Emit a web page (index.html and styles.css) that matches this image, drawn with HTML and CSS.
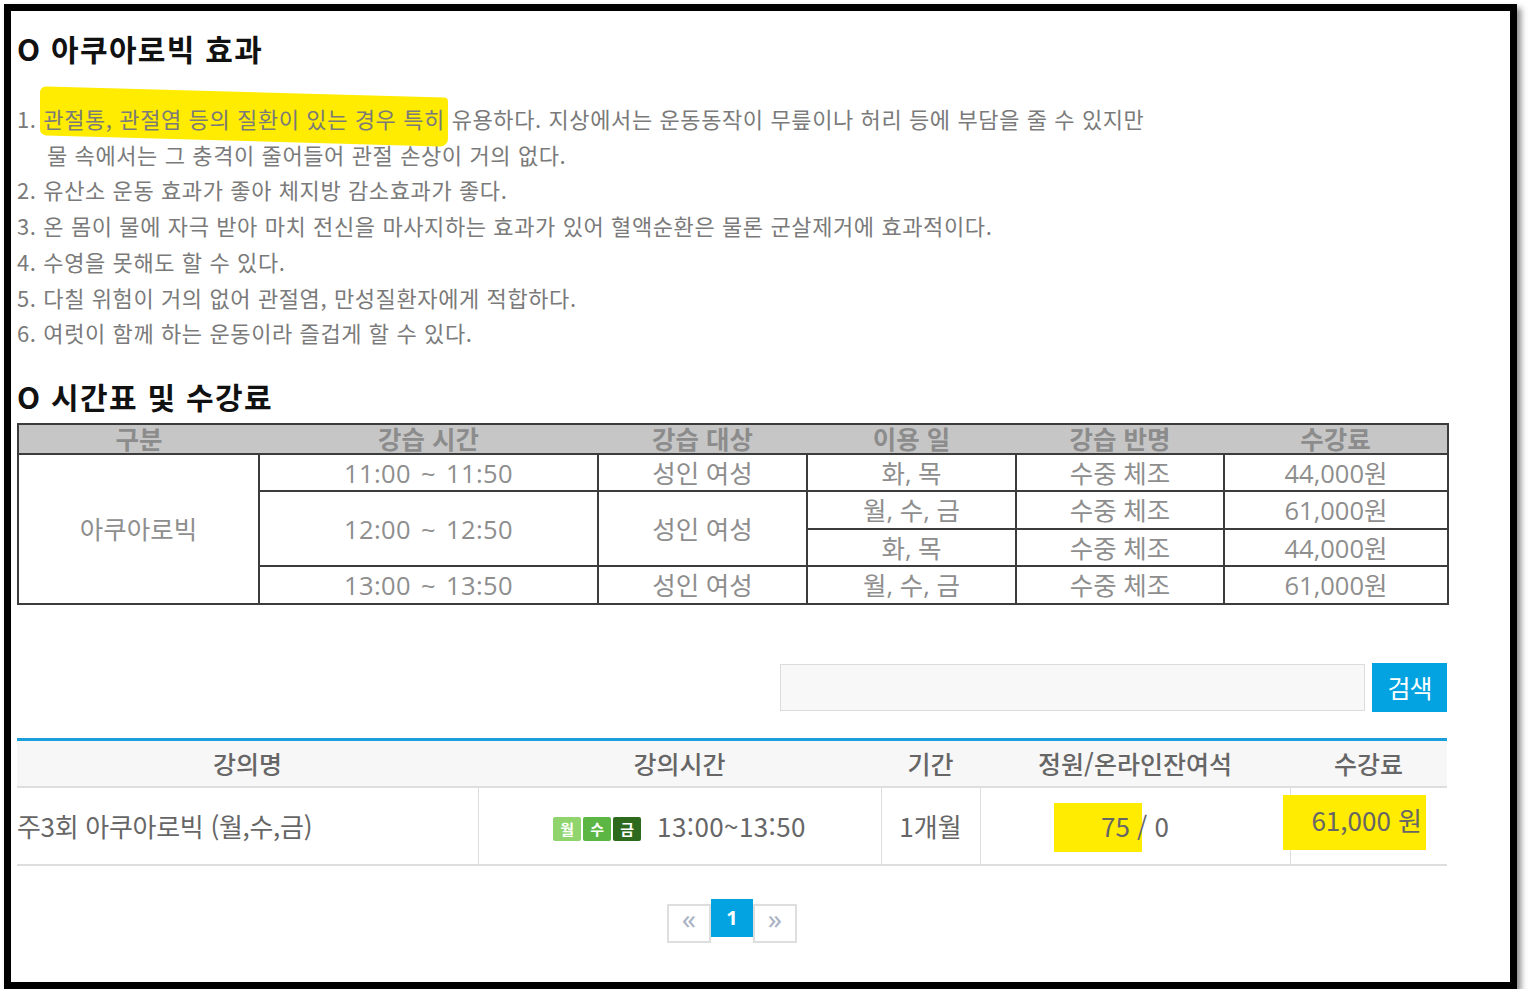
FILE: index.html
```html
<!DOCTYPE html>
<html lang="ko">
<head>
<meta charset="utf-8">
<title>아쿠아로빅</title>
<link rel="stylesheet" href="styles.css">
</head>
<body>
<div class="frame">
  <h2 class="title">O 아쿠아로빅 효과</h2>
  <ol class="effects">
    <li>1. <span class="mark-line">관절통, 관절염 등의 질환이 있는 경우 특히</span> 유용하다. 지상에서는 운동동작이 무릎이나 허리 등에 부담을 줄 수 있지만</li>
    <li class="indent">물 속에서는 그 충격이 줄어들어 관절 손상이 거의 없다.</li>
    <li>2. 유산소 운동 효과가 좋아 체지방 감소효과가 좋다.</li>
    <li>3. 온 몸이 물에 자극 받아 마치 전신을 마사지하는 효과가 있어 혈액순환은 물론 군살제거에 효과적이다.</li>
    <li>4. 수영을 못해도 할 수 있다.</li>
    <li>5. 다칠 위험이 거의 없어 관절염, 만성질환자에게 적합하다.</li>
    <li>6. 여럿이 함께 하는 운동이라 즐겁게 할 수 있다.</li>
  </ol>

  <h2 class="title title-2">O 시간표 및 수강료</h2>
  <table class="schedule">
    <colgroup>
      <col class="c1"><col class="c2"><col class="c3"><col class="c4"><col class="c5"><col class="c6">
    </colgroup>
    <thead>
      <tr><th>구분</th><th>강습 시간</th><th>강습 대상</th><th>이용 일</th><th>강습 반명</th><th>수강료</th></tr>
    </thead>
    <tbody>
      <tr><td rowspan="4">아쿠아로빅</td><td class="tm">11:00 ~ 11:50</td><td>성인 여성</td><td>화, 목</td><td>수중 체조</td><td>44,000원</td></tr>
      <tr><td class="tm" rowspan="2">12:00 ~ 12:50</td><td rowspan="2">성인 여성</td><td>월, 수, 금</td><td>수중 체조</td><td>61,000원</td></tr>
      <tr><td>화, 목</td><td>수중 체조</td><td>44,000원</td></tr>
      <tr><td class="tm">13:00 ~ 13:50</td><td>성인 여성</td><td>월, 수, 금</td><td>수중 체조</td><td>61,000원</td></tr>
    </tbody>
  </table>

  <div class="search">
    <input class="search-input" type="text" aria-label="검색어">
    <button class="search-btn" type="button">검색</button>
  </div>

  <table class="courses">
    <colgroup>
      <col class="k1"><col class="k2"><col class="k3"><col class="k4"><col class="k5">
    </colgroup>
    <thead>
      <tr><th>강의명</th><th>강의시간</th><th>기간</th><th>정원/온라인잔여석</th><th>수강료</th></tr>
    </thead>
    <tbody>
      <tr>
        <td class="name">주3회 아쿠아로빅 (월,수,금)</td>
        <td class="time"><span class="days"><span class="day d1">월</span><span class="day d2">수</span><span class="day d3">금</span></span>13:00~13:50</td>
        <td>1개월</td>
        <td><span class="mark-seat">75</span> / 0</td>
        <td><span class="mark-fee">61,000 원</span></td>
      </tr>
    </tbody>
  </table>

  <div class="pager">
    <span class="pg pg-side">&laquo;</span>
    <span class="pg pg-active">1</span>
    <span class="pg pg-side">&raquo;</span>
  </div>
</div>
</body>
</html>
```

FILE: styles.css
```css
html, body {
  margin: 0;
  padding: 0;
  background: #ffffff;
}

body {
  font-family: "Noto Sans CJK KR", "Noto Sans", sans-serif;
}

.frame {
  box-sizing: border-box;
  width: 1513px;
  height: 985px;
  margin: 4px 0 0 4px;
  border: 7px solid #000;
  box-shadow: 4px 4px 6px rgba(0, 0, 0, 0.45);
  padding: 20px 0 0 6px;
  background: #fff;
}

.title {
  margin: 0;
  font-size: 30px;
  line-height: 35px;
  font-weight: 700;
  color: #111;
  letter-spacing: 1.3px;
}

.effects {
  list-style: none;
  margin: 35px 0 0 0;
  padding: 0;
  font-size: 22px;
  line-height: 35.7px;
  color: #7a7a7a;
  font-weight: 400;
  letter-spacing: 0.6px;
}

.effects .indent {
  padding-left: 30px;
}

.mark-line {
  position: relative;
  z-index: 0;
  display: inline-block;
  line-height: 35.7px;
}

.mark-line::before {
  content: "";
  position: absolute;
  z-index: -1;
  left: -3px;
  right: -3px;
  top: -9px;
  bottom: -4px;
  background: #ffec00;
  transform: skewY(1.6deg);
  border-radius: 6px 4px 8px 6px;
}

.title-2 {
  margin-top: 28px;
}

.schedule {
  margin-top: 9px;
  width: 1430px;
  border-collapse: collapse;
  table-layout: fixed;
  border: 2px solid #3c3c3c;
  font-family: "Open Sans", "Noto Sans CJK KR", sans-serif;
  color: #8e8e8e;
  font-size: 25.5px;
}

.schedule .c1 { width: 241px; }
.schedule .c2 { width: 339px; }
.schedule .c3 { width: 209px; }
.schedule .c4 { width: 209px; }
.schedule .c5 { width: 208px; }
.schedule .c6 { width: 224px; }

.schedule th {
  background: #c6c6c6;
  height: 28px;
  padding: 0;
  line-height: 26px;
  font-weight: 700;
  color: #8c8c8c;
  font-family: "Noto Sans CJK KR", sans-serif;
  font-size: 25.5px;
  border: 0;
  vertical-align: top;
}

.schedule td {
  border: 2px solid #3c3c3c;
  text-align: center;
  padding: 0;
  height: 35.5px;
  line-height: 30px;
}

.schedule td.tm {
  word-spacing: 3px;
  letter-spacing: 0.4px;
}

.search {
  display: flex;
  justify-content: flex-end;
  align-items: center;
  gap: 7px;
  width: 1430px;
  margin-top: 58px;
}

.search-input {
  box-sizing: border-box;
  width: 585px;
  height: 47px;
  margin: 0;
  border: 1px solid #dcdcdc;
  background: #f8f8f8;
  outline: none;
}

.search-btn {
  box-sizing: border-box;
  width: 75px;
  height: 49px;
  margin: 0;
  border: 0;
  background: #02a3e0;
  color: #fff;
  font-family: "Noto Sans CJK KR", sans-serif;
  font-size: 25px;
  letter-spacing: -1px;
  padding: 0;
}

.courses {
  margin-top: 26px;
  width: 1430px;
  border-collapse: collapse;
  table-layout: fixed;
  border-top: 3px solid #1a9fdc;
  font-family: "Noto Sans CJK KR", sans-serif;
  color: #666;
}

.courses .k1 { width: 461px; }
.courses .k2 { width: 403px; }
.courses .k3 { width: 99px; }
.courses .k4 { width: 310px; }
.courses .k5 { width: 157px; }

.courses th {
  background: #f7f7f7;
  height: 45px;
  padding: 0;
  font-weight: 500;
  font-size: 25px;
  letter-spacing: 0;
  color: #666;
  border-bottom: 2px solid #dedede;
}

.courses td {
  height: 76px;
  padding: 0;
  text-align: center;
  font-size: 26px;
  letter-spacing: 0;
  color: #666;
  border-left: 1px solid #dedede;
  border-bottom: 2px solid #dedede;
}

.courses td.name {
  text-align: left;
  border-left: 0;
  letter-spacing: -0.3px;
}

.courses td.time {
  letter-spacing: 0.4px;
}

.days {
  display: inline-flex;
  gap: 2px;
  vertical-align: middle;
  margin-right: 16px;
  position: relative;
  top: -1px;
}

.day {
  display: inline-block;
  width: 28px;
  height: 24px;
  line-height: 24px;
  text-align: center;
  color: #fff;
  font-size: 15px;
  font-weight: 700;
  letter-spacing: 0;
  border-radius: 2px;
}

.d1 { background: #8fd46d; }
.d2 { background: #5bb643; }
.d3 { background: #2e6a1e; }

.mark-seat {
  background: #ffec00;
  padding: 4px 12px 8px 47px;
  margin-left: -47px;
  margin-right: -12px;
}

.mark-fee {
  background: #ffec00;
  padding: 6px 4px 12px 28px;
  margin-left: -28px;
  position: relative;
  top: -6px;
}

.pager {
  display: flex;
  justify-content: center;
  align-items: flex-start;
  width: 1430px;
  margin-top: 33px;
  font-family: "Noto Sans", sans-serif;
}

.pg {
  box-sizing: border-box;
  display: flex;
  align-items: center;
  justify-content: center;
}

.pg-side {
  width: 44px;
  height: 39px;
  margin-top: 5px;
  border: 2px solid #dedede;
  color: #aab3c4;
  font-size: 28px;
  line-height: 1;
  padding-bottom: 10px;
}

.pg-active {
  width: 42px;
  height: 38px;
  background: #02a3e0;
  color: #fff;
  font-size: 20px;
  font-weight: 700;
}
```
